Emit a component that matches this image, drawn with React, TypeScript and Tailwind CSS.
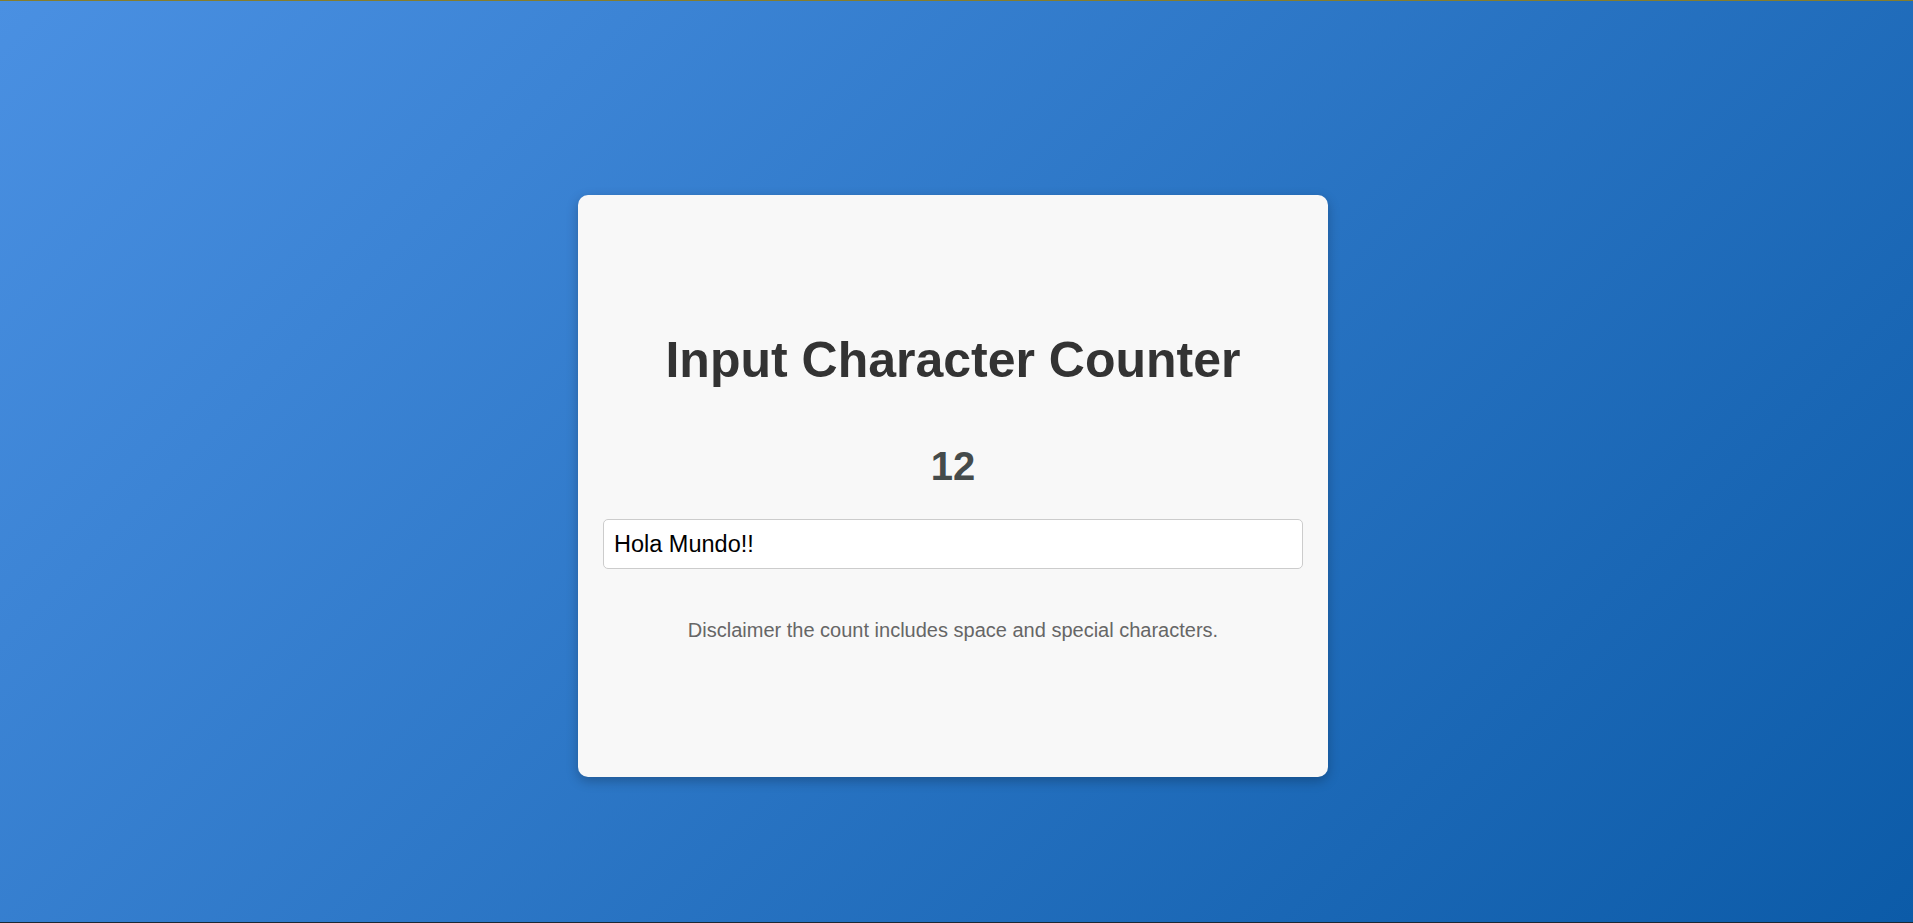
import { useState } from "react";

function App() {
  const [text, setText] = useState("Hola Mundo!!");

  return (
    <div className="h-screen w-full flex flex-col bg-[linear-gradient(135deg,#4a90e2_0%,#0c5ba8_100%)] font-['Liberation_Sans',Arial,sans-serif]">
      <div className="h-px w-full bg-[#857d2c]" />
      <div className="flex-1 flex items-start justify-center pt-[194px] pr-[7px]">
        <div className="w-[750px] h-[582px] bg-[#f8f8f8] rounded-[10px] shadow-[0_4px_12px_rgba(0,0,0,0.25)] px-[25px] pt-[140px] flex flex-col items-center">
          <h1 className="text-[50px] leading-none font-bold text-[#333]">Input Character Counter</h1>
          <h2 className="mt-[61px] text-[40px] leading-none font-bold text-[#454b4b]">{text.length}</h2>
          <input
            type="text"
            value={text}
            onChange={(e) => setText(e.target.value)}
            className="mt-[33px] w-full h-[50px] px-[10px] bg-white border border-[#ccc] rounded-[5px] text-[23.5px] text-black outline-none"
          />
          <p className="mt-[51px] text-[20px] leading-none text-[#666]">
            Disclaimer the count includes space and special characters.
          </p>
        </div>
      </div>
      <div className="h-px w-full bg-[#1c2833]" />
    </div>
  );
}

export default App;
